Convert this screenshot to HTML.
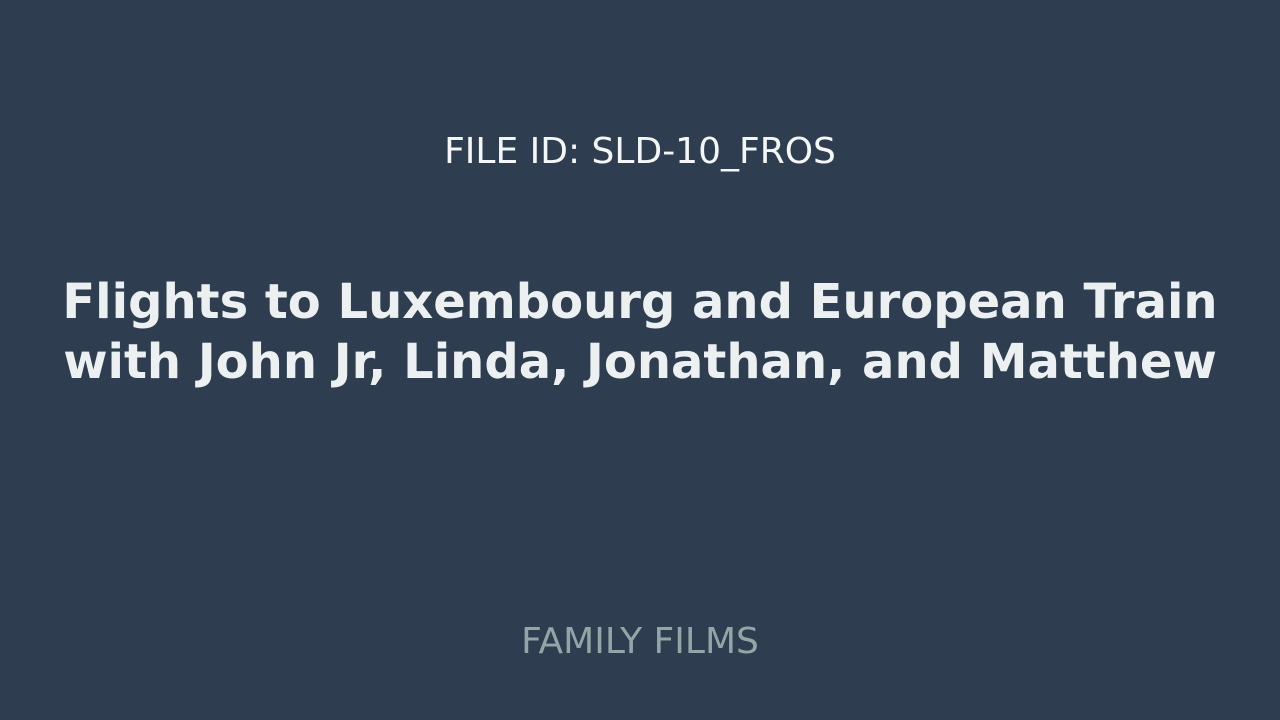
<!DOCTYPE html>
<html><head><meta charset="utf-8"><style>
html,body{margin:0;padding:0;width:1280px;height:720px;background:#2e3d50;overflow:hidden;font-family:"DejaVu Sans","Liberation Sans",sans-serif;}
.id{position:absolute;top:129px;left:0;width:1280px;text-align:center;color:#f4f6f7;font-size:36px;line-height:46px;}
.t{position:absolute;top:272px;left:0;width:1280px;text-align:center;color:#ecf0f1;font-size:48px;font-weight:bold;line-height:60px;}
.f{position:absolute;top:620px;left:0;width:1280px;text-align:center;color:#95a5a6;font-size:36px;line-height:44px;}
</style></head><body>
<div class="id">FILE ID: SLD-10_FROS</div>
<div class="t">Flights to Luxembourg and European Train<br>with John Jr, Linda, Jonathan, and Matthew</div>
<div class="f">FAMILY FILMS</div>
</body></html>
